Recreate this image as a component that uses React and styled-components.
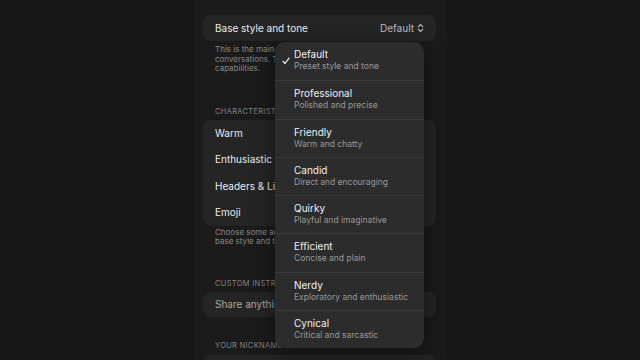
import React from "react";
import styled, { createGlobalStyle } from "styled-components";

const Global = createGlobalStyle`
  html, body { margin: 0; padding: 0; background: #171717; }
  body { font-family: Inter, "Noto Sans", sans-serif; -webkit-font-smoothing: antialiased; }
`;

const Page = styled.div`
  width: 640px;
  height: 360px;
  overflow: hidden;
  display: flex;
  justify-content: center;
  background: #171717;
`;

const Column = styled.div`
  position: relative;
  width: 254px;
  padding: 15px 11px 0 10px;
  box-sizing: border-box;
  background: #1b1b1b;
  display: flex;
  flex-direction: column;
`;

const Card = styled.div`
  background: #252525;
  border-radius: 8px;
  display: flex;
  flex-direction: column;
  margin-top: ${(p) => p.$mt || 0}px;
`;

const Row = styled.div`
  height: ${(p) => p.$h || 26}px;
  display: flex;
  align-items: center;
  justify-content: space-between;
  padding: 0 12px;
  font-size: 10px;
  white-space: nowrap;
  overflow: hidden;
  color: ${(p) => (p.$muted ? "#a9a9a9" : "#ececec")};
`;

const Value = styled.span`
  display: flex;
  align-items: center;
  gap: 3px;
  color: #bdbdbd;
`;

const Note = styled.p`
  margin: ${(p) => p.$m || "0"};
  padding: 0 12px;
  font-size: 8px;
  line-height: 9.5px;
  color: #878787;
`;

const Label = styled.div`
  margin: ${(p) => p.$m || "0"};
  padding: 0 12px;
  font-size: 7.5px;
  letter-spacing: 0.3px;
  line-height: 10px;
  text-transform: uppercase;
  color: #858585;
`;

const Menu = styled.div`
  position: absolute;
  left: 82px;
  top: 42px;
  width: 149px;
  background: #2c2c2c;
  border-radius: 10px;
  box-shadow: 0 6px 24px rgba(0, 0, 0, 0.45);
  display: flex;
  flex-direction: column;
  overflow: hidden;
`;

const Item = styled.div`
  position: relative;
  height: 38.25px;
  box-sizing: border-box;
  padding: 6px 8px 0 19px;
  display: flex;
  flex-direction: column;
  gap: 1px;
  border-top: ${(p) => (p.$first ? "none" : "1px solid #3a3a3a")};
`;

const Title = styled.span`
  font-size: 10px;
  line-height: 12px;
  color: #f0f0f0;
`;

const Sub = styled.span`
  font-size: 8.5px;
  line-height: 11px;
  color: #989898;
  white-space: nowrap;
`;

const Tick = styled.svg`
  position: absolute;
  left: 7px;
  top: 15px;
  width: 8px;
  height: 8px;
`;

const options = [
  ["Default", "Preset style and tone"],
  ["Professional", "Polished and precise"],
  ["Friendly", "Warm and chatty"],
  ["Candid", "Direct and encouraging"],
  ["Quirky", "Playful and imaginative"],
  ["Efficient", "Concise and plain"],
  ["Nerdy", "Exploratory and enthusiastic"],
  ["Cynical", "Critical and sarcastic"],
];

export default function App() {
  return (
    <>
      <Global />
      <Page>
        <Column>
          <Card>
            <Row>
              <span>Base style and tone</span>
              <Value>
                Default
                <svg width="7" height="10" viewBox="0 0 7 10" fill="none" stroke="#bdbdbd" strokeWidth="1.1" strokeLinecap="round" strokeLinejoin="round">
                  <path d="M1.2 3.8 L3.5 1.5 L5.8 3.8" />
                  <path d="M1.2 6.2 L3.5 8.5 L5.8 6.2" />
                </svg>
              </Value>
            </Row>
          </Card>
          <Note $m="4px 0 0">
            This is the main voice and tone ChatGPT uses in your conversations. This doesn't change ChatGPT's capabilities.
          </Note>
          <Label $m="33px 0 0">Characteristics</Label>
          <Card $mt={3}>
            <Row $h={26.5}>Warm</Row>
            <Row $h={26.5}>Enthusiastic</Row>
            <Row $h={26.5}>Headers &amp; Lists</Row>
            <Row $h={26.5}>Emoji</Row>
          </Card>
          <Note $m="2px 0 0">
            Choose some additional customizations on top of your base style and tone.
          </Note>
          <Label $m="32px 0 0">Custom instructions</Label>
          <Card $mt={3}>
            <Row $h={25} $muted>Share anything else ChatGPT should know</Row>
          </Card>
          <Label $m="24px 0 0">Your nickname</Label>
          <Card $mt={4}>
            <Row $h={26} $muted>What should ChatGPT call you?</Row>
          </Card>
          <Menu>
            {options.map(([t, s], i) => (
              <Item key={t} $first={i === 0}>
                {i === 0 && (
                  <Tick viewBox="0 0 8 8" fill="none" stroke="#f0f0f0" strokeWidth="1.2" strokeLinecap="round" strokeLinejoin="round">
                    <path d="M1 4.3 L3 6.5 L7 1.2" />
                  </Tick>
                )}
                <Title>{t}</Title>
                <Sub>{s}</Sub>
              </Item>
            ))}
          </Menu>
        </Column>
      </Page>
    </>
  );
}
